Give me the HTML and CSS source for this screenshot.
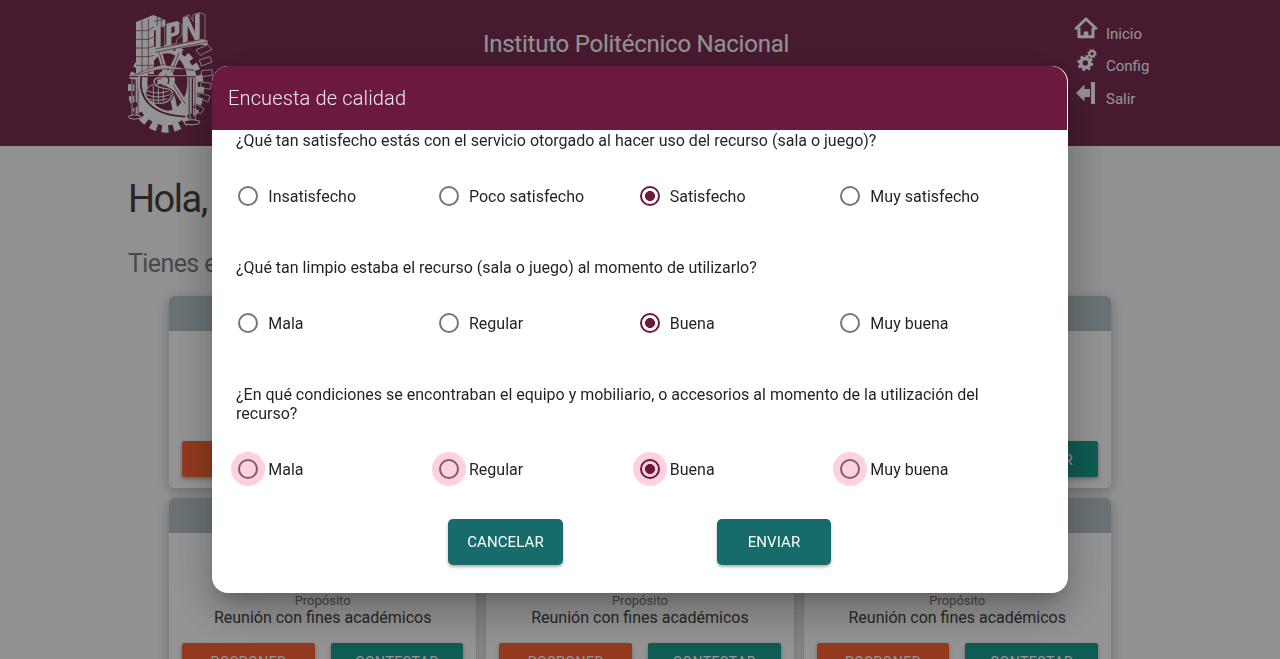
FILE: index.html
```html
<!DOCTYPE html>
<html lang="es">
<head>
<meta charset="utf-8">
<title>Instituto Politécnico Nacional</title>
<link rel="stylesheet" href="styles.css">
</head>
<body>
<header class="top">
  <svg class="logo" viewBox="54 36 258 366" aria-label="IPN">
    <!-- gear: side faces of the teeth, then front face -->
    <g fill="#7b2e54" stroke="#fff" stroke-width="2.500">
      <path d="M258 150l34-16 14 14-36 18zM268 180l32-10 6 16-32 12zM274 212l32-3 1 17-32 4zM274 246l30 4-3 18-30-5zM268 278l32 10-6 18-30-14zM254 310l28 16-10 16-28-18zM232 340l22 24-14 12-22-26z"/>
    </g>
    <ellipse cx="168" cy="266" rx="102" ry="120" fill="none" stroke="#fff" stroke-width="24" stroke-dasharray="20 15" stroke-dashoffset="8"/>
    <path fill-rule="evenodd" fill="#fff" d="M168 148a96 114 0 1 1 0 228a96 114 0 1 1 0-228zM172 160a60 86 0 1 0 0 172a60 86 0 1 0 0-172z"/>
    <path d="M172 236L148 156M172 236L210 154M180 240L226 312M176 242L198 340M160 244L116 332" fill="none" stroke="#fff" stroke-width="15"/>
    <path d="M172 236L148 158M176 234L208 158M186 250L226 312" fill="none" stroke="#7b2e54" stroke-width="2"/>
    <ellipse cx="168" cy="238" rx="27" ry="27" fill="#fff"/>
    <path d="M166 224q16 10 8 28" fill="none" stroke="#7b2e54" stroke-width="4"/>
    <!-- tower -->
    <path d="M78 66L130 45 166 60V78L132 92V222H78z" fill="#fff"/>
    <path d="M96 60V222M115 56V222M78 92h38l16-12M78 118h38l16-8M78 144h38l16-6M78 170h38l16-4M78 196h54M142 50v28M154 56v24M132 64l30-6" stroke="#7b2e54" stroke-width="2" fill="none"/>
    <!-- initials: shaded sides with bright fronts -->
    <g fill="#7b2e54" stroke="#fff" stroke-width="2">
      <path d="M138 84l14-6 12 4v56l-26 8zM170 72l32-8 14 10v32l-16 12v12l-30 6zM219 52l18-8 12 20V44l20-6 16 6v74l-28 6-38 4z"/>
    </g>
    <path d="M138 82l14-5v66l-14 5z" fill="#fff"/>
    <path fill-rule="evenodd" d="M170 72l32-8q6 2 6 10v22q0 8-8 10l-16 5v23l-14 4zM184 82v18l10-3V79z" fill="#fff"/>
    <path d="M219 54l14-6 22 48V44l14-5v80l-14 3-22-44v46l-14 4z" fill="#fff"/>
    <path d="M136 146L272 118 294 122 292 136 272 134 136 158z" fill="#fff"/>
    <path d="M136 157L272 130 294 126M136 147L272 119" stroke="#7b2e54" stroke-width="2" fill="none"/>
    <!-- balance, cup and snake -->
    <path d="M54 232L114 207 158 194 252 211 208 208 160 206 120 214z" fill="#fff" stroke="#7b2e54" stroke-width="1.500"/>
    <path d="M60 230H256M66 236v112M84 236v112M75 238v110M238 232v130M256 230v130M247 234v126" fill="none" stroke="#7b2e54" stroke-width="4"/>
    <path d="M58 227H258M66 234v114M84 234v114M240 230v132M256 230v130" fill="none" stroke="#fff" stroke-width="2.500"/>
    <path d="M94 230C84 292 122 346 226 350" fill="none" stroke="#fff" stroke-width="18"/>
    <path d="M94 230C84 292 122 346 226 350" fill="none" stroke="#7b2e54" stroke-width="5"/>
    <ellipse cx="145" cy="280" rx="38" ry="30" fill="#7b2e54" stroke="#fff" stroke-width="3"/>
    <path d="M110 272q35 14 70 0M109 284q35 14 70 0M114 296q28 10 58 0M130 254v52M145 250v60M160 254v52" fill="none" stroke="#fff" stroke-width="3"/>
    <path d="M154 232q-28 2-20 20 10 12 36 14 22 4 16 22-10 22-38 22" fill="none" stroke="#7b2e54" stroke-width="10"/>
    <path d="M154 232q-28 2-20 20 10 12 36 14 22 4 16 22-10 22-38 22" fill="none" stroke="#fff" stroke-width="4"/>
    <path d="M56 348q18-8 36 0l-2 7q-16 5-32 0zM222 364q24-10 48 0l-4 8q-20 5-40 0z" fill="#7b2e54" stroke="#fff" stroke-width="3"/>
  </svg>
  <h1 class="title">Instituto Politécnico Nacional</h1>
  <nav class="nav">
    <a><svg viewBox="0 0 24 24"><path d="M1.200 13.300L12 3l10.800 10.300" stroke="#fff" stroke-width="2.800" fill="none"/><path d="M5 11.500v9.200h14v-9.200" fill="none" stroke="#fff" stroke-width="3"/><path d="M9.700 21v-5.500h4.600V21" fill="#fff"/></svg><span>Inicio</span></a>
    <a><svg viewBox="0 0 24 24"><circle cx="11.300" cy="14" r="4.500" fill="none" stroke="#fff" stroke-width="3.600"/><circle cx="11.300" cy="14" r="6.800" fill="none" stroke="#fff" stroke-width="2.400" stroke-dasharray="2.900 2.440"/><circle cx="18" cy="4.700" r="2.700" fill="none" stroke="#fff" stroke-width="2.200"/><circle cx="18" cy="4.700" r="3.900" fill="none" stroke="#fff" stroke-width="1.500" stroke-dasharray="1.600 1.463"/></svg><span>Config</span></a>
    <a><svg viewBox="0 0 24 24"><path d="M2 12L10.500 3.500V8H16v8h-5.500v4.500zM17 1h4v22h-4z" fill="#fff"/></svg><span>Salir</span></a>
  </nav>
</header>
<main class="page">
  <h2 class="hello">Hola,</h2>
  <h3 class="sub">Tienes e</h3>
  <div class="grid">
    <article class="card"><div class="bar"></div><div class="info"></div><div class="acts"><b class="later"></b><b></b></div></article>
    <article class="card"><div class="bar"></div><div class="info"></div><div class="acts"><b class="later"></b><b></b></div></article>
    <article class="card"><div class="bar"></div><div class="info"></div><div class="acts"><b class="later"></b><b>CONTESTAR</b></div></article>
    <article class="card"><div class="bar"></div><div class="info"><small>Propósito</small><span>Reunión con fines académicos</span></div><div class="acts"><b class="later">POSPONER</b><b>CONTESTAR</b></div></article>
    <article class="card"><div class="bar"></div><div class="info"><small>Propósito</small><span>Reunión con fines académicos</span></div><div class="acts"><b class="later">POSPONER</b><b>CONTESTAR</b></div></article>
    <article class="card"><div class="bar"></div><div class="info"><small>Propósito</small><span>Reunión con fines académicos</span></div><div class="acts"><b class="later">POSPONER</b><b>CONTESTAR</b></div></article>
  </div>
</main>
<div class="overlay"></div>
<section class="modal">
  <div class="modal-head">Encuesta de calidad</div>
  <div class="modal-body">
    <p class="q">¿Qué tan satisfecho estás con el servicio otorgado al hacer uso del recurso (sala o juego)?</p>
    <div class="opts"><label><i></i>Insatisfecho</label><label><i></i>Poco satisfecho</label><label><i class="on"></i>Satisfecho</label><label><i></i>Muy satisfecho</label></div>
    <p class="q">¿Qué tan limpio estaba el recurso (sala o juego) al momento de utilizarlo?</p>
    <div class="opts"><label><i></i>Mala</label><label><i></i>Regular</label><label><i class="on"></i>Buena</label><label><i></i>Muy buena</label></div>
    <p class="q">¿En qué condiciones se encontraban el equipo y mobiliario, o accesorios al momento de la utilización del recurso?</p>
    <div class="opts halo"><label><i></i>Mala</label><label><i></i>Regular</label><label><i class="on"></i>Buena</label><label><i></i>Muy buena</label></div>
    <div class="buttons"><button>CANCELAR</button><button>ENVIAR</button></div>
  </div>
</section>
</body>
</html>
```

FILE: styles.css
```css
* { box-sizing: border-box; }
html, body { height: 100%; overflow: hidden; }
body { margin: 0; background: #fafafa; font: 16px/19px Roboto, sans-serif; color: rgba(0,0,0,.87); }
h1, h2, h3, p { margin: 0; font-weight: 400; }
.top { height: 146px; background: #7b2e54; color: #fff; padding: 12px 128px 0; display: grid; grid-template-columns: 86px 1fr 78px; align-items: start; }
.logo { width: 86px; height: 122px; }
.title { font-size: 24px; line-height: 32px; padding: 16px 16px 0 0; text-align: center; letter-spacing: -.24px; }
.nav { display: flex; flex-direction: column; padding-top: 4px; }
.nav a { display: flex; gap: 8px; height: 32.5px; font-size: 15px; white-space: nowrap; }
.nav svg { width: 24px; height: 24px; flex: none; }
.nav span { padding-top: 9px; }
.nav a:nth-child(2) span { padding-top: 8px; }
.page { padding: 30px 128px 0; color: #444; }
.hello { font-size: 38px; line-height: 46px; white-space: nowrap; letter-spacing: -1.5px; }
.sub { font-size: 25px; line-height: 32px; margin-top: 25px; padding-top: 1px; height: 32px; color: #7c7c7c; letter-spacing: -.6px; }
.grid { display: grid; grid-template-columns: repeat(3, 307.3px); gap: 10px; margin: 17px 0 0 41px; }
.card { height: 192px; background: #fff; border-radius: 6px; overflow: hidden; box-shadow: 0 3px 12px rgba(40,55,70,.32); display: flex; flex-direction: column; }
.bar { height: 35px; background: #b7c5cb; flex: none; }
.info { height: 110px; display: flex; flex-direction: column; justify-content: flex-end; align-items: center; padding-bottom: 16px; }
.info small { font-size: 13px; line-height: 15px; color: #7c7c7c; }
.acts { display: flex; gap: 16px; padding: 0 13px; }
.acts b { flex: 1 1 0; min-width: 0; height: 36px; line-height: 38px; font-size: 14px; font-weight: 400; letter-spacing: .5px; text-align: center; color: #fff; background: #1a9f91; border-radius: 2px; box-shadow: 0 2px 4px rgba(0,0,0,.3); }
.acts .later { background: #fd6535; }
.overlay { position: fixed; inset: 0; background: rgba(0,0,0,.42); }
.modal { position: fixed; left: 212px; top: 66px; width: 856px; height: 527px; border-radius: 16px; overflow: hidden; background: #fff; box-shadow: 0 24px 38px 3px rgba(0,0,0,.14), 0 9px 46px 8px rgba(0,0,0,.12), 0 11px 15px -7px rgba(0,0,0,.2); }
.modal-head { height: 64px; margin-right: 1px; padding-left: 16px; border-radius: 16px 16px 0 0; background: #6c1940; color: rgba(255,255,255,.9); font-size: 20px; line-height: 64px; font-weight: 300; letter-spacing: .14px; }
.modal-body { padding: 1px 24px 0; }
.q { max-width: 802px; }
.opts { display: grid; grid-template-columns: repeat(4, 200.7px); margin: 33px 0 49px; height: 26px; }
.opts label { display: flex; align-items: center; height: 26px; line-height: 26px; padding-left: 2px; gap: 10.3px; white-space: nowrap; padding-top: 2px; }
.opts i { width: 20px; height: 20px; margin-bottom: 2px; border: 2px solid #757575; border-radius: 50%; flex: none; }
.opts i.on { border-color: #6c1940; background: radial-gradient(circle, #6c1940 4.700px, transparent 5.300px); }
.opts label:nth-child(3) { padding-left: 2.600px; gap: 9.800px; }
.halo { margin-bottom: 0; }
.halo i { box-shadow: 0 0 0 7px #ffd0e0; background-color: #ffd0e0; border-color: #7a6068; }
.halo i.on { background-color: #ffd0e0; }
.buttons { display: flex; gap: 154px; padding: 37px 0 0 212px; }
.buttons button { width: 115px; height: 46px; border: 0; border-radius: 5px; background: #176b6b; color: #fff; font: 15px Roboto, sans-serif; letter-spacing: .1px; box-shadow: 0 2px 3px rgba(0,0,0,.3); }
.buttons button + button { width: 114px; }
```
